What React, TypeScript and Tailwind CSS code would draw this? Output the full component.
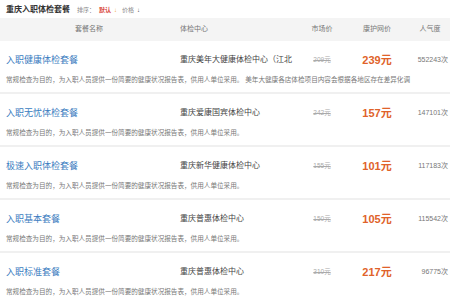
import { FC } from "react";

type Pkg = {
  name: string;
  center: string;
  market: string;
  price: string;
  hot: string;
  desc: string;
};

const baseDesc = "常规检查为目的，为入职人员提供一份简要的健康状况报告表，供用人单位采用。";

const rows: Pkg[] = [
  {
    name: "入职健康体检套餐",
    center: "重庆美年大健康体检中心（江北",
    market: "209元",
    price: "239元",
    hot: "552243次",
    desc: baseDesc + " 美年大健康各店体检项目内容会根据各地区存在差异化调",
  },
  { name: "入职无忧体检套餐", center: "重庆爱康国宾体检中心", market: "242元", price: "157元", hot: "147101次", desc: baseDesc },
  { name: "极速入职体检套餐", center: "重庆新华健康体检中心", market: "155元", price: "101元", hot: "117183次", desc: baseDesc },
  { name: "入职基本套餐", center: "重庆普惠体检中心", market: "150元", price: "105元", hot: "115542次", desc: baseDesc },
  { name: "入职标准套餐", center: "重庆普惠体检中心", market: "310元", price: "217元", hot: "96775次", desc: baseDesc },
];

const cols = "grid grid-cols-[178px_122px_44px_66px_40px]";

const App: FC = () => {
  return (
    <div
      className="w-[450px] h-[300px] overflow-hidden bg-white text-[#333]"
      style={{ fontFamily: '"Liberation Sans", "Noto Sans CJK SC", sans-serif' }}
    >
      <div className="h-[18px] flex items-center pl-[6px] pt-[2px]">
        <span className="text-[8px] font-bold text-[#333]">重庆入职体检套餐</span>
        <span className="ml-[7px] text-[6px] text-[#888]">排序：</span>
        <span className="ml-[4px] text-[6px] text-[#d9473a] font-bold">默认</span>
        <span className="ml-[3px] text-[6px] text-[#f0a030]">↓</span>
        <span className="ml-[5px] text-[6px] text-[#888]">价格</span>
        <span className="ml-[3px] text-[6px] text-[#333]">↓</span>
      </div>

      <div className={`${cols} h-[23px] items-center bg-[#f4f4f4] text-[7px] text-[#777]`}>
        <div className="text-center">套餐名称</div>
        <div className="pl-[2px]">体检中心</div>
        <div className="text-center">市场价</div>
        <div className="text-center">康护网价</div>
        <div className="text-center">人气度</div>
      </div>

      {rows.map((row, index) => {
        return (
          <div key={index} className="h-[53px] border-b-2 border-[#f0f0f0] flex flex-col">
            <div className={`${cols} items-center h-[14px] mt-[11px]`}>
              <div className="pl-[6px] text-[9px] text-[#3a7cc0] whitespace-nowrap">{row.name}</div>
              <div className="pl-[2px] text-[8px] text-[#444] whitespace-nowrap overflow-hidden">{row.center}</div>
              <div className="text-center text-[6.5px] text-[#aaa] line-through">{row.market}</div>
              <div className="text-center text-[11px] font-bold text-[#e0622a]">{row.price}</div>
              <div className="text-right pr-[2px] text-[7px] text-[#777] whitespace-nowrap">{row.hot}</div>
            </div>
            <div className="pl-[6px] mt-[9px] text-[6.6px] leading-[10px] text-[#777] whitespace-nowrap overflow-hidden">
              {row.desc}
            </div>
          </div>
        );
      })}
    </div>
  );
};

export default App;
